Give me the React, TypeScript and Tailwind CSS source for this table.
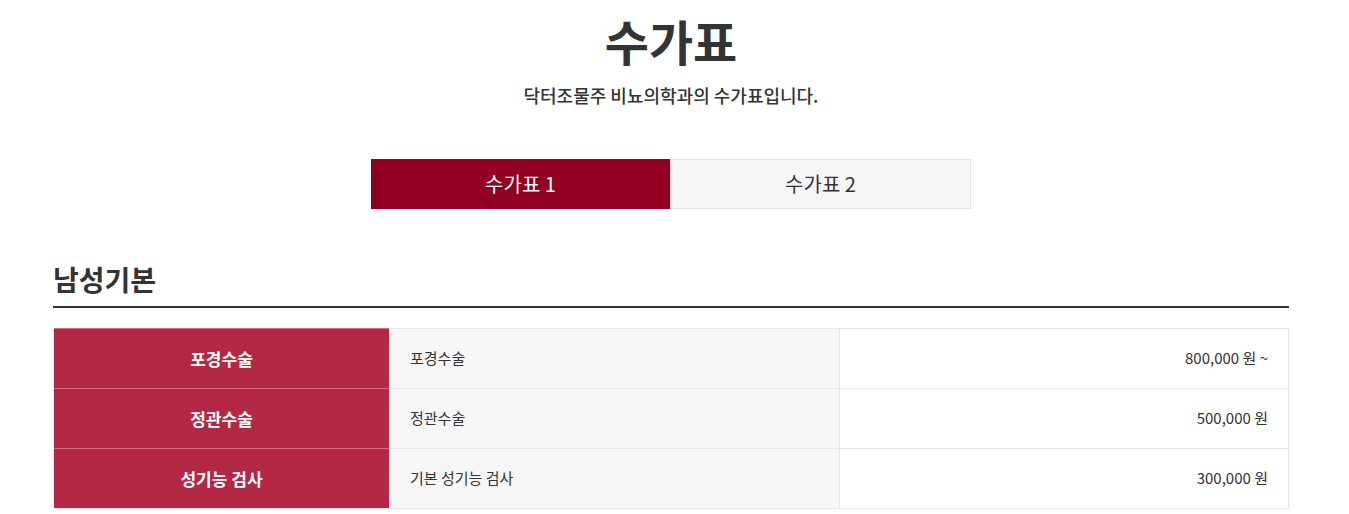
const rows = [
  { name: "포경수술", desc: "포경수술", price: "800,000 원 ~" },
  { name: "정관수술", desc: "정관수술", price: "500,000 원" },
  { name: "성기능 검사", desc: "기본 성기능 검사", price: "300,000 원" },
];

const App = () => {
  return (
    <div
      className="w-[1342px] bg-white text-[#333]"
      style={{ fontFamily: '"Noto Sans CJK KR", "Noto Sans", sans-serif' }}
    >
      {/* Title */}
      <div className="pt-[8px] text-center">
        <h1 className="text-[48px] leading-[64px] font-bold">수가표</h1>
        <p className="mt-[11px] text-[18px] leading-[24px] font-medium">
          닥터조물주 비뇨의학과의 수가표입니다.
        </p>
      </div>

      {/* Tabs */}
      <div className="mx-auto mt-[52px] flex w-[600px]">
        <button className="h-[50px] flex-1 bg-[#920021] text-[20px] text-white">수가표 1</button>
        <button className="h-[50px] flex-1 border border-[#e6e6e6] bg-[#f6f6f6] text-[20px] text-[#333]">
          수가표 2
        </button>
      </div>

      {/* Section */}
      <div className="mx-auto mt-[51px] w-[1236px]">
        <h2 className="border-b-2 border-[#333] pb-[8px] text-[28px] leading-[38px] font-bold">남성기본</h2>

        <div className="mt-[20px] border-x border-b border-[#e6e6e6]">
          {rows.map((row) => (
            <div key={row.name} className="flex h-[60px] border-t border-[#e6e6e6]">
              <div className="-mt-px flex w-[335px] items-center justify-center border-t border-[#d66d80] bg-[#b32844] text-[17px] font-bold text-white">
                {row.name}
              </div>
              <div className="flex w-[450px] items-center bg-[#f6f6f6] pl-[21px] text-[15px]">
                {row.desc}
              </div>
              <div className="flex flex-1 items-center justify-end border-l border-[#e6e6e6] pr-[20px] text-[15px]">
                {row.price}
              </div>
            </div>
          ))}
        </div>
      </div>
    </div>
  );
};

export default App;
